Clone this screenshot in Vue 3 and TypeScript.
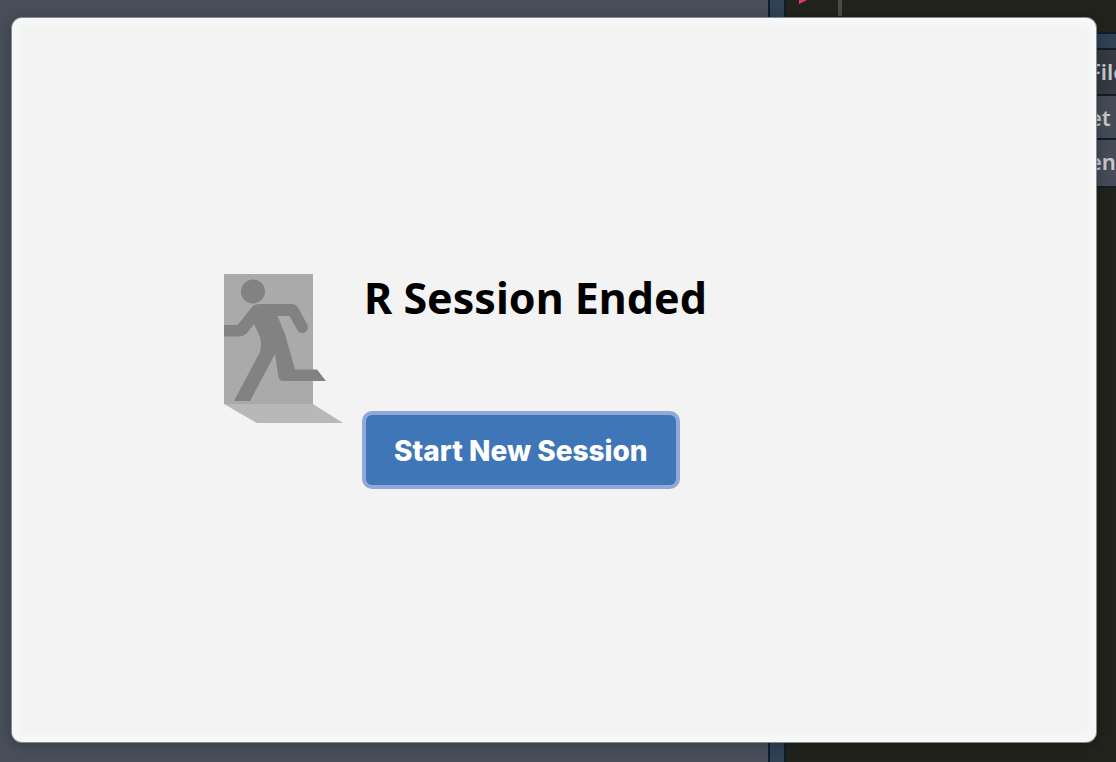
<script setup lang="ts">
interface Bar {
  label: string
  kind: string
}

const bars: Bar[] = [
  { label: 'File', kind: 'tabs' },
  { label: 'et', kind: 'toolbar' },
  { label: 'ent', kind: 'path' },
]
</script>

<template>
  <div class="workspace">
    <div class="source-pane"></div>
    <div class="splitter"></div>
    <div class="side">
      <div class="console">
        <svg class="prompt" viewBox="0 0 8 5" aria-hidden="true">
          <path d="M0 0H8L0 4Z" fill="#d93d70" />
        </svg>
        <span class="cursor"></span>
      </div>
      <div class="row-splitter"></div>
      <div v-for="bar in bars" :key="bar.kind" class="bar" :class="bar.kind">{{ bar.label }}</div>
    </div>

    <main class="dialog" role="dialog" aria-labelledby="title">
      <svg class="exit" viewBox="0 0 120 150" aria-hidden="true">
        <path d="M0 0H89V130H0Z" fill="#aaaaaa" />
        <path d="M0 130H89L119 149H33Z" fill="#b8b8b8" />
        <g fill="#828282">
          <circle cx="29" cy="17.500" r="12" />
          <path d="M0 51H13.500L26 35.500Q30 30 35 30H68Q72 30 74 33.500L83 50C85 54 83 59 78.500 59C76 59 74 57.500 73 55.500L65.500 42H53.500L61 60L71 95.500H93L102 107H59Q55 107 54.500 103L51 80L26 127H10L35.500 79Q37 75 37 70Q37 66 36 63L30 50L24 58Q20 62.500 14 62.500H0Z" />
        </g>
      </svg>
      <div class="content">
        <h1 id="title">R Session Ended</h1>
        <button type="button">Start New Session</button>
      </div>
    </main>
  </div>
</template>

<style>
body {
  margin: 0;
  background: #22231d;
}
</style>

<style scoped>
.workspace {
  position: relative;
  display: flex;
  height: 100vh;
  overflow: hidden;
  background: #22231d;
}

.source-pane {
  flex: 1;
  background: #484f5b;
}

.splitter {
  width: 14px;
  border: solid #0f1d2c;
  border-width: 0 2px;
  background: #304254;
}

.side {
  width: 330px;
}

.console {
  display: flex;
  height: 32px;
  padding-left: 13px;
}

.prompt {
  width: 8px;
  height: 5px;
}

.cursor {
  width: 4px;
  height: 16px;
  margin-left: 31px;
  background: #4b4c46;
}

.row-splitter {
  height: 14px;
  border: solid #0f1d2c;
  border-width: 2px 0;
  background: #304254;
}

.bar {
  box-sizing: border-box;
  height: 46px;
  padding-left: 303px;
  overflow: hidden;
  border-bottom: 2px solid #0f1d2c;
  background: #454c57;
  color: #c8c9c9;
  font: 600 22px/42px "Noto Sans", sans-serif;
  white-space: nowrap;
}

.tabs {
  background: #353a42;
}

.toolbar {
  height: 44px;
}

.path {
  height: 48px;
}

.dialog {
  position: absolute;
  inset: 18px 20px 20px 12px;
  box-sizing: border-box;
  display: flex;
  align-items: flex-start;
  padding: 256px 24px 24px 212px;
  border-radius: 10px;
  background: #f3f3f3;
  box-shadow:
    0 0 0 1px #858a91,
    0 2px 16px rgba(0, 0, 0, 0.3),
    inset 0 0 16px #fafdfc;
}

.exit {
  flex: none;
  width: 120px;
  height: 150px;
}

.content {
  margin-left: 18px;
}

h1 {
  margin: 0 0 89px;
  padding-left: 2px;
  color: #000;
  font: 700 43px/48px "Noto Sans", sans-serif;
}

button {
  display: block;
  height: 78px;
  padding: 2px 28px 0;
  border: 4px solid #91a9d9;
  border-radius: 10px;
  background: #3f76b7;
  color: #fff;
  font: 800 28px/36px Inter, sans-serif;
}
</style>
